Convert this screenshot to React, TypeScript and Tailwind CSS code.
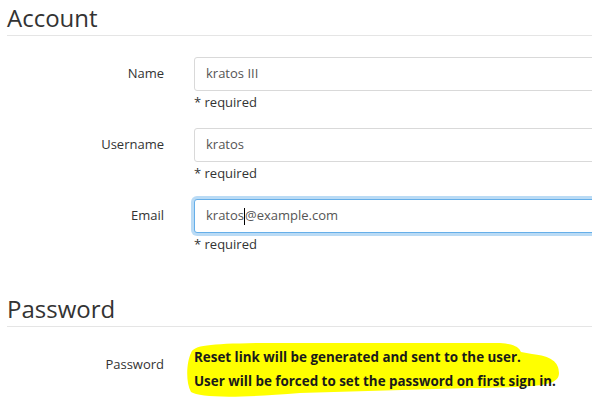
import React from "react";

function Field({ label, value, focused, caretAfter }: { label: string; value: string; focused?: boolean; caretAfter?: number }) {
  const before = caretAfter !== undefined ? value.slice(0, caretAfter) : value;
  const after = caretAfter !== undefined ? value.slice(caretAfter) : "";
  return (
    <div className="grid grid-cols-[157px_420px] gap-x-[30px]">
      <div className="h-[34px] flex items-center justify-end text-[13px] text-[#333]">{label}</div>
      <div>
        <div
          className={
            focused
              ? "h-[34px] rounded-[3px] border border-[#66afe9] shadow-[0_0_0_3px_rgba(102,175,233,0.45)] flex items-center pl-[11px] text-[13px] text-[#555] bg-white"
              : "h-[34px] rounded-[3px] border border-[#d9d9d9] flex items-center pl-[11px] text-[13px] text-[#555] bg-white"
          }
        >
          <span>{before}</span>
          {caretAfter !== undefined && <span className="inline-block w-px h-[17px] bg-black" />}
          <span>{after}</span>
        </div>
        <div className="mt-px leading-5 text-[13px] text-[#333]">* required</div>
      </div>
    </div>
  );
}

export default function App() {
  return (
    <div className="w-[592px] h-[409px] overflow-hidden bg-white pl-[7px] font-['Open_Sans',sans-serif] text-[#333]">
      <h2 className="text-[24px] leading-[30px] pt-[3px]">Account</h2>
      <div className="h-px bg-[#e5e5e5] mt-[2px] w-[600px]" />
      <div className="mt-[21px] flex flex-col gap-[16px]">
        <Field label="Name" value="kratos III" />
        <Field label="Username" value="kratos" />
        <Field label="Email" value="kratos@example.com" focused caretAfter={6} />
      </div>
      <h2 className="text-[24px] leading-[30px] mt-[40px]">Password</h2>
      <div className="h-px bg-[#e5e5e5] mt-[2px] w-[600px]" />
      <div className="mt-[18px] grid grid-cols-[157px_420px] gap-x-[30px]">
        <div className="h-[40px] flex items-center justify-end text-[13px] text-[#333]">Password</div>
        <div className="relative">
          <svg
            className="absolute left-[-10px] top-[-6px]"
            width="380"
            height="60"
            viewBox="184 338 380 60"
          >
            <path
              d="M191,352 C194,344 210,343 260,342 L500,342 C514,343 519,346 521,351 L532,353 C551,355 559,361 559,372 C559,385 540,386 470,387 L300,392 C240,397 200,397 191,391 C185,380 187,360 191,352 Z"
              fill="#ffff00"
            />
          </svg>
          <div className="relative text-[13.4px] leading-6 font-bold text-[#1a1a1a]">
            <div>Reset link will be generated and sent to the user.</div>
            <div>User will be forced to set the password on first sign in.</div>
          </div>
        </div>
      </div>
    </div>
  );
}
